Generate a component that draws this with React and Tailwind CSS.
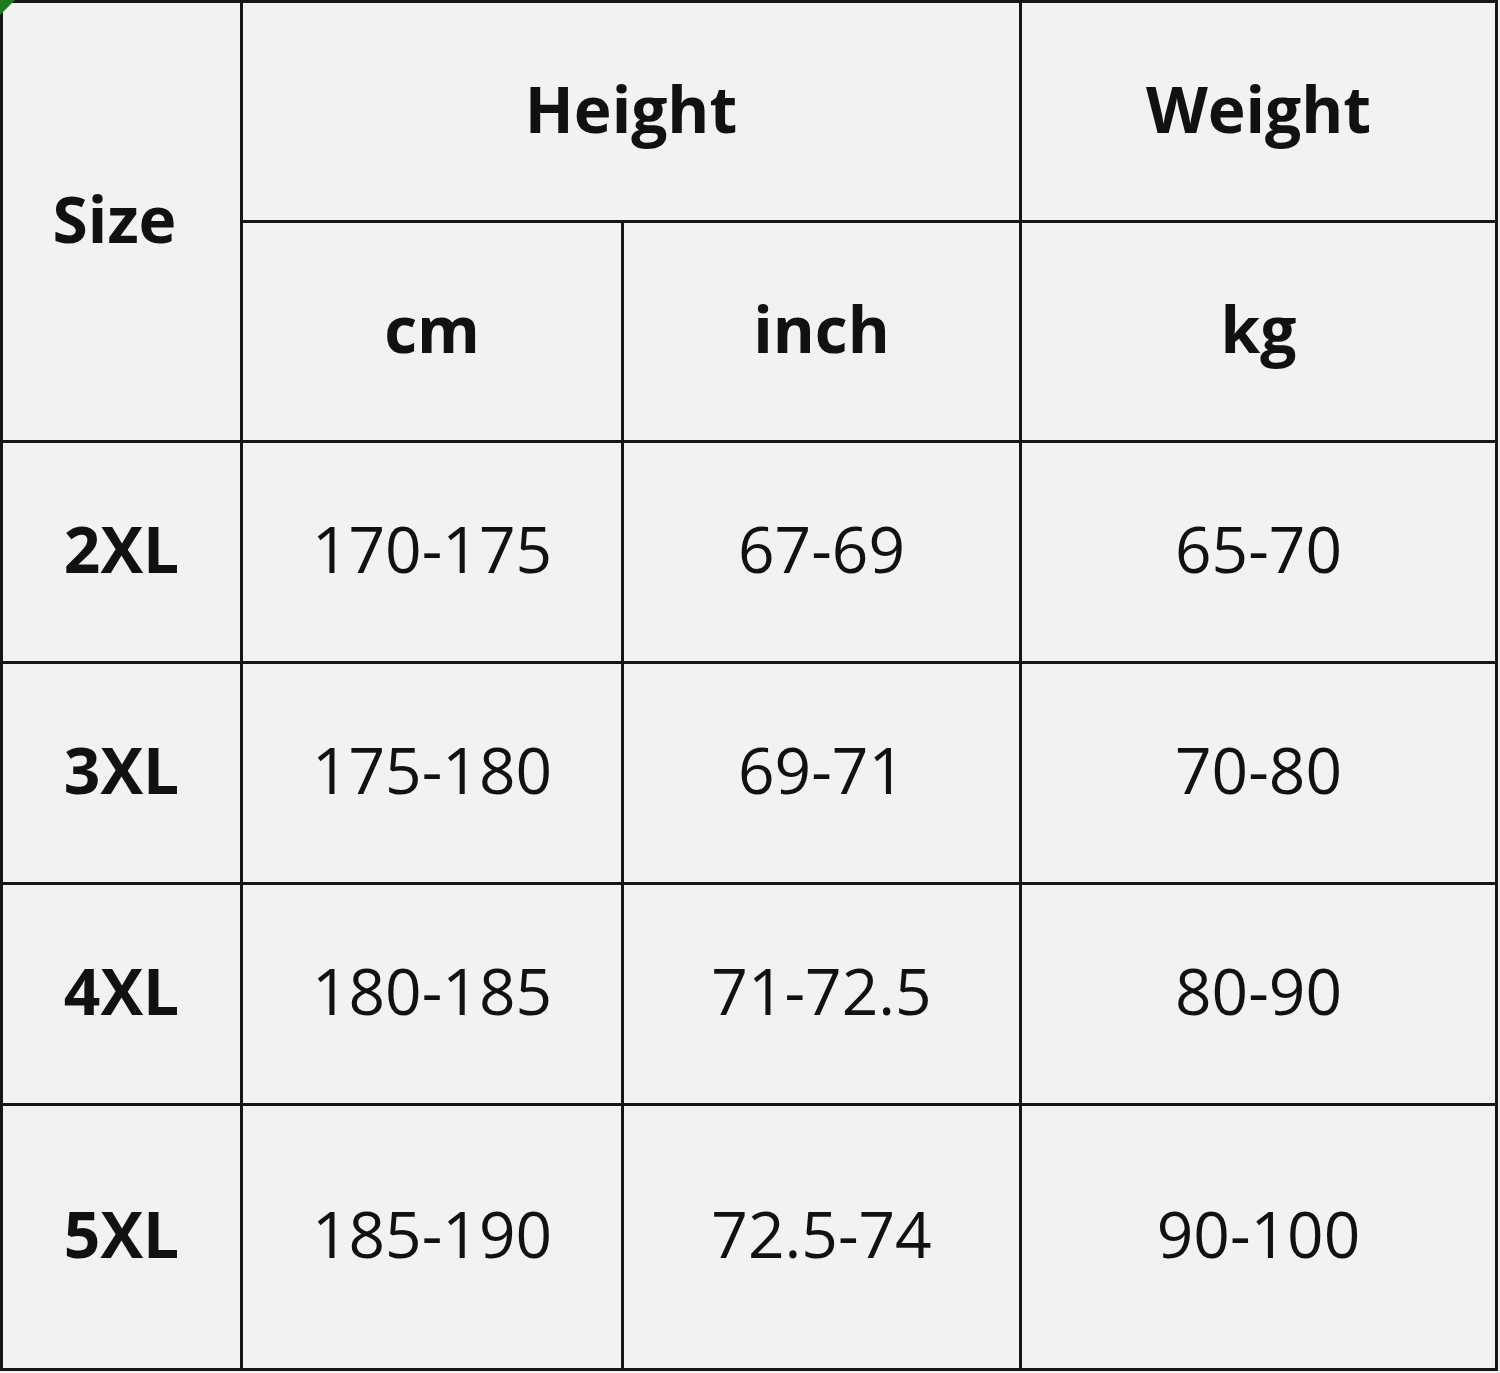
import React from 'react';

const rows = [
    { size: '2XL', cm: '170-175', inch: '67-69', kg: '65-70' },
    { size: '3XL', cm: '175-180', inch: '69-71', kg: '70-80' },
    { size: '4XL', cm: '180-185', inch: '71-72.5', kg: '80-90' },
    { size: '5XL', cm: '185-190', inch: '72.5-74', kg: '90-100' },
];

const Cell = ({ className = '', bold, children }) => (
    <div className={`bg-[#f2f2f2] flex items-center justify-center pb-[6px] text-[64px] leading-none text-[#111] ${bold ? 'font-bold' : 'font-normal'} ${className}`}>
        {children}
    </div>
);

const App = () => {
    return (
        <div className="w-[1500px] h-[1373px] bg-[#f2f2f2] relative" style={{ fontFamily: '"Open Sans", "Noto Sans", sans-serif' }}>
            <div className="w-[1498px] h-[1371px] border-[3px] border-[#161616] bg-[#161616] grid grid-cols-[237px_378px_395px_473px] grid-rows-[217px_217px_218px_218px_218px_262px] gap-[3px]">
                <Cell bold className="row-span-2 pr-[14px]">Size</Cell>
                <Cell bold className="col-span-2">Height</Cell>
                <Cell bold>Weight</Cell>
                <Cell bold>cm</Cell>
                <Cell bold>inch</Cell>
                <Cell bold>kg</Cell>
                {rows.map(r => (
                    <React.Fragment key={r.size}>
                        <Cell bold>{r.size}</Cell>
                        <Cell>{r.cm}</Cell>
                        <Cell>{r.inch}</Cell>
                        <Cell>{r.kg}</Cell>
                    </React.Fragment>
                ))}
            </div>
            <svg className="absolute left-0 top-0" width="16" height="16" viewBox="0 0 16 16">
                <polygon points="0,0 15,0 0,15" fill="#1f7a1f" />
            </svg>
        </div>
    );
};

export default App;
